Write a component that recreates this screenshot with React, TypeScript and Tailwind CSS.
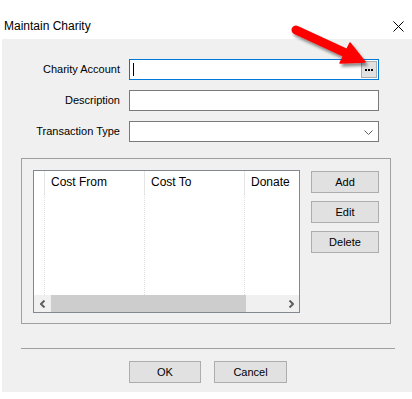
const font = { fontFamily: '"Liberation Sans", Arial, sans-serif' };

const Field = ({ children, focused }: { children?: React.ReactNode; focused?: boolean }) => (
  <div
    className={`relative h-[21px] bg-white border ${focused ? "border-[#0078d7]" : "border-[#7a7a7a]"}`}
  >
    {children}
  </div>
);

const Btn = ({ label, w }: { label: string; w: string }) => (
  <div
    className={`${w} h-[22px] flex items-center justify-center bg-[#e1e1e1] border border-[#adadad] text-[11px] text-black`}
  >
    {label}
  </div>
);

const RedArrow = () => (
  <svg className="absolute left-0 top-0 pointer-events-none" width="412" height="399">
    <defs>
      <filter id="shadow" x="-20%" y="-20%" width="140%" height="160%">
        <feDropShadow dx="2" dy="3" stdDeviation="1.8" floodColor="#000" floodOpacity="0.45" />
      </filter>
    </defs>
    <g filter="url(#shadow)">
      <line x1="296" y1="30" x2="348" y2="54" stroke="#f00" strokeWidth="9" strokeLinecap="round" />
      <polygon points="365,62 340,63 350,43" fill="#f00" stroke="#f00" strokeWidth="1.5" strokeLinejoin="round" />
    </g>
  </svg>
);

export default function App() {
  return (
    <div className="relative w-[412px] h-[399px] bg-white text-black" style={font}>
      {/* title bar */}
      <div className="h-[39px] flex justify-between pl-[4px] pr-[8px] pt-[17px]">
        <span className="text-[12px] leading-[18px]">Maintain Charity</span>
        <svg width="11" height="11" viewBox="0 0 11 11" className="mt-[4px]">
          <path d="M0.5 0.5 L10.5 10.5 M10.5 0.5 L0.5 10.5" stroke="#000" strokeWidth="1" />
        </svg>
      </div>

      {/* body */}
      <div className="ml-[2px] w-[410px] h-[353px] bg-[#f0f0f0] pt-[20px]">
        <div className="grid grid-cols-[118px_250px] gap-x-[9px] gap-y-[10px] text-[11px]">
          <div className="flex items-center justify-end">Charity Account</div>
          <Field focused>
            <div className="absolute left-[3px] top-[3px] w-px h-[13px] bg-black" />
            <div className="absolute right-[1px] top-[1px] w-[16px] h-[17px] bg-[#e1e1e1] border border-[#adadad] flex items-center justify-center gap-[1px]">
              <span className="w-[2px] h-[2px] bg-black" />
              <span className="w-[2px] h-[2px] bg-black" />
              <span className="w-[2px] h-[2px] bg-black" />
            </div>
          </Field>
          <div className="flex items-center justify-end">Description</div>
          <Field />
          <div className="flex items-center justify-end">Transaction Type</div>
          <Field>
            <svg width="9" height="5" viewBox="0 0 9 5" className="absolute right-[5px] top-[8px]">
              <path d="M0.5 0.5 L4.5 4.5 L8.5 0.5" stroke="#606060" fill="none" strokeWidth="1" />
            </svg>
          </Field>
        </div>

        {/* group box */}
        <div className="ml-[19px] mt-[16px] w-[370px] h-[166px] border border-[#a0a0a0] flex gap-[11px] pl-[11px] pt-[11px]">
          <div className="w-[267px] h-[143px] border border-[#828790] bg-white flex flex-col">
            <div className="grid grid-cols-[11px_100px_100px_1fr] h-[22px] text-[12px] overflow-hidden">
              <div className="border-r border-[#e5e5e5]" />
              <div className="border-r border-[#e5e5e5] pl-[6px] leading-[22px]">Cost From</div>
              <div className="border-r border-[#e5e5e5] pl-[6px] leading-[22px]">Cost To</div>
              <div className="pl-[6px] leading-[22px] whitespace-nowrap overflow-hidden">Donate</div>
            </div>
            <div className="grid grid-cols-[11px_100px_100px_1fr] h-[102px]">
              <div className="border-r border-dotted border-[#e0e0e0]" />
              <div className="border-r border-dotted border-[#e0e0e0]" />
              <div className="border-r border-dotted border-[#e0e0e0]" />
              <div />
            </div>
            <div className="h-[17px] flex bg-[#f0f0f0]">
              <div className="w-[17px] flex items-center justify-center">
                <svg width="6" height="8" viewBox="0 0 6 8">
                  <path d="M4.5 0.5 L1 4 L4.5 7.5" stroke="#606060" strokeWidth="2" fill="none" />
                </svg>
              </div>
              <div className="w-[195px] bg-[#cdcdcd]" />
              <div className="flex-1" />
              <div className="w-[17px] flex items-center justify-center">
                <svg width="6" height="8" viewBox="0 0 6 8">
                  <path d="M1.5 0.5 L5 4 L1.5 7.5" stroke="#606060" strokeWidth="2" fill="none" />
                </svg>
              </div>
            </div>
          </div>
          <div className="flex flex-col gap-[8px] pt-[1px]">
            <Btn label="Add" w="w-[68px]" />
            <Btn label="Edit" w="w-[68px]" />
            <Btn label="Delete" w="w-[68px]" />
          </div>
        </div>

        {/* separator */}
        <div className="ml-[19px] mt-[24px] w-[374px] h-px bg-[#a0a0a0]" />

        {/* bottom buttons */}
        <div className="ml-[127px] mt-[12px] flex gap-[13px]">
          <Btn label="OK" w="w-[72px]" />
          <Btn label="Cancel" w="w-[73px]" />
        </div>
      </div>

      <RedArrow />
    </div>
  );
}
